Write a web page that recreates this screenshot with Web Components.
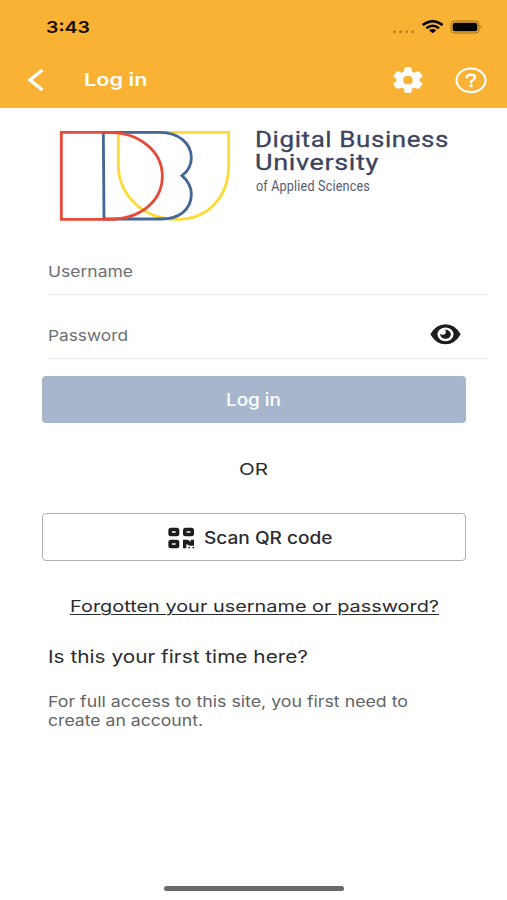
<!DOCTYPE html>
<html lang="en">
<head>
<meta charset="utf-8">
<title>Log in</title>
<style>
html,body{margin:0;height:100%;background:#fff}
body{font-family:Inter,"Liberation Sans",sans-serif;color:#2a2c2f}
</style>
</head>
<body>
<login-page></login-page>
<script>
const define=(name,html,ready)=>{
  const t=document.createElement('template');t.innerHTML=html;
  customElements.define(name,class extends HTMLElement{
    constructor(){super();this.attachShadow({mode:'open'}).append(t.content.cloneNode(true));}
    connectedCallback(){if(ready)ready.call(this);}
  });
};

// One line of text, widened to the measure given in its w attribute.
define('wide-text',`<style>
:host{display:block;flex:none;white-space:nowrap;line-height:20px;height:20px}
span{display:inline-block;transform-origin:0 0}
:host([underlined]) span{text-decoration:underline;text-decoration-thickness:1px;text-underline-offset:2px;text-decoration-skip-ink:auto}
</style><span><slot></slot></span>`,function(){
  const s=this.shadowRoot.querySelector('span'),w=parseFloat(this.getAttribute('w'));
  this.style.width=w+'px';
  this.style.fontSize=this.getAttribute('size')+'px';
  s.style.transform='scaleX('+w/s.getBoundingClientRect().width+')';
});

define('status-bar',`<style>
:host{display:flex;height:49px;padding:3px 24px 0 46px;align-items:center;color:#140d00}
wide-text{font-weight:600;flex:none;margin-top:-1px}
svg{display:block;margin-left:auto;margin-top:-1px}
</style>
<wide-text size="16.5" w="44">3:43</wide-text>
<svg width="92" height="16" viewBox="0 0 276 48">
<g fill="#b98424"><circle cx="11" cy="38" r="4.500"/><circle cx="29" cy="38" r="4.500"/><circle cx="47" cy="38" r="4.500"/><circle cx="65" cy="38" r="4.500"/></g>
<g fill="none" stroke="#000" stroke-width="7.500"><path d="M95 18Q125-5 155 18"/><path d="M106 28Q125 13 144 28"/></g>
<path d="M114 34Q125 26 136 34L125 43Z"/>
<rect x="180" y="6" width="84" height="36" rx="10" fill="none" stroke="#9d701e" stroke-width="3"/>
<rect x="185" y="11" width="74" height="26" rx="6"/>
<path d="M269 18q6 6 0 12z" fill="#9d701e"/></svg>`);

define('nav-bar',`<style>
:host{display:flex;height:56px;align-items:center;color:#fff;padding:0 20px 0 27px}
wide-text{font-weight:600;margin-left:40px}
.gear{margin-left:auto;margin-right:32px}
svg{display:block}
</style>
<svg width="17" height="24" viewBox="0 0 17 24" fill="none" stroke="#fff" stroke-width="3.500"><path d="M15.500 2L3 12l12.500 10"/></svg>
<wide-text size="17.5" w="63.500">Log in</wide-text>
<svg class="gear" width="30" height="26" viewBox="0 0 90 78" fill="#fff" stroke="#fff" stroke-width="5" stroke-linejoin="round"><path fill-rule="evenodd" d="M37 4Q45 1 53 4L55 15L64 20L76 15Q82 19 86 28L77 35V44L86 51Q82 59 75 63L64 59L55 64L53 74Q45 77 37 74L35 64L26 59L14 63Q7 59 4 51L13 44V35L4 28Q8 19 14 15L26 20L35 15ZM45 24C34 24 28 31 28 39.500S34 54.500 45 54.500S62 47 62 39.500S56 24 45 24Z"/></svg>
<svg width="32" height="27" viewBox="0 0 96 81" fill="none" stroke="#fff"><ellipse cx="48" cy="40" rx="43.500" ry="35.500" stroke-width="6.500"/><path d="M35 31Q36 23.500 48 23.500Q60 23.500 60 31Q60 36 53 39.500Q48 42 48 46" stroke-width="7.500" stroke-linecap="round"/><ellipse cx="48" cy="56" rx="5.500" ry="4.500" fill="#fff" stroke="none"/></svg>`);

define('site-logo',`<style>
:host{display:flex;height:126px;padding:7px 0 0 39.500px;box-sizing:border-box}
svg{display:block;flex:none}
.name{font-family:Roboto,sans-serif;font-weight:400;color:#3b4460;-webkit-text-stroke:.3px #3b4460;letter-spacing:.5px;padding:14.500px 0 0 5.500px}
.name wide-text{height:23px}
.name .sub{letter-spacing:.2px;color:#555c70;-webkit-text-stroke:0;margin-top:.5px;margin-left:1px}
</style>
<svg width="210" height="120" viewBox="0 0 630 360" fill="none" stroke-width="8.500">
<path stroke="#fddb35" d="M235 52H566V150C566 250 500 313 412 313C310 313 235 240 235 150Z"/>
<path stroke="#456795" d="M190 52H360C415 52 454 85 454 128C454 152 442 170 426 182C442 196 454 212 454 238C454 285 415 312 365 312H192Z"/>
<path stroke="#e64a38" d="M64 52H205C300 52 367 110 367 183C367 260 300 313 205 313H64Z"/></svg>
<div class="name"><wide-text size="21.5" w="194">Digital Business</wide-text><wide-text size="21.5" w="124">University</wide-text><wide-text class="sub" size="14" w="114">of Applied Sciences</wide-text></div>`);

define('form-field',`<style>
:host{display:flex;align-items:center;height:64px;margin:0 20px 0 48px;padding-top:18px;box-sizing:border-box;border-bottom:1.500px solid #e6e7e8;color:#6d7073}
</style><slot></slot>`);

define('push-button',`<style>
:host{display:flex;align-items:center;justify-content:center;box-sizing:border-box;margin:0 41.500px 0 42px;height:48px;border-radius:4px;font-weight:500;gap:9px}
:host([primary]){background:#a8b6cd;color:#fff;height:47px;padding-top:1px}
:host([outline]){border:1.500px solid #b0b1b2;padding:2px 8px 0 0}
</style><slot></slot>`);

define('qr-icon',`<style>:host{display:block;flex:none}svg{display:block}</style>
<svg width="27" height="22" viewBox="415 258 81 66"><g fill="none" stroke="#1c1d1f" stroke-width="11"><rect x="421.500" y="265.500" width="22" height="15" rx="2"/><rect x="465.500" y="265.500" width="22" height="15" rx="2"/><rect x="421.500" y="301.500" width="22" height="15" rx="2"/></g><path fill="#1c1d1f" d="M460 296H474L483 302V296H493V314H480L470 309V322H460ZM476 318h5v4h-5zM488 318h5v4h-5z"/></svg>`);

define('eye-icon',`<style>:host{display:block;margin:-2px 26px 0 auto}svg{display:block}</style>
<svg width="31" height="21" viewBox="0 0 93 63"><path fill="#1b1e20" d="M1 31Q18 1 46.500 1T92 31Q75 61 46.500 61T1 31Z"/><ellipse cx="46.500" cy="31" rx="24" ry="20.500" fill="#fff"/><ellipse cx="46.500" cy="31" rx="16" ry="13.500" fill="#1b1e20"/><ellipse cx="38" cy="24" rx="9.500" ry="8" fill="#fff"/></svg>`);

define('login-page',`<style>
:host{display:flex;flex-direction:column;height:900px;width:507px;overflow:hidden;background:#fff}
header{background:#f9b233;height:108px;padding-bottom:.4px;flex:none}
.or{margin:35.500px 0 34px 239px}
.forgot{margin:35px 0 0 69.500px}
.first{margin:31px 0 0 48px}
.info{margin:25px 0 0 48px;color:#626568}
.info wide-text{height:19px}
.pill{margin:auto auto 9px 164px;width:180px;height:5px;border-radius:3px;background:#69696a;flex:none}
push-button,form-field,site-logo,.info{flex:none}
</style>
<header><status-bar></status-bar><nav-bar></nav-bar></header>
<site-logo></site-logo>
<form-field style="height:61px;padding-top:15px"><wide-text size="15" w="85">Username</wide-text></form-field>
<form-field><wide-text size="15" w="80">Password</wide-text><eye-icon></eye-icon></form-field>
<push-button primary style="margin-top:17px"><wide-text size="17" w="55">Log in</wide-text></push-button>
<wide-text class="or" size="16.5" w="29">OR</wide-text>
<push-button outline><qr-icon></qr-icon><wide-text size="16.7" w="128.500">Scan QR code</wide-text></push-button>
<wide-text class="forgot" underlined size="16.5" w="369">Forgotten your username or password?</wide-text>
<wide-text class="first" size="17.5" w="260">Is this your first time here?</wide-text>
<div class="info"><wide-text size="15" w="360">For full access to this site, you first need to</wide-text><wide-text size="15" w="155">create an account.</wide-text></div>
<div class="pill"></div>`);
</script>
</body>
</html>
